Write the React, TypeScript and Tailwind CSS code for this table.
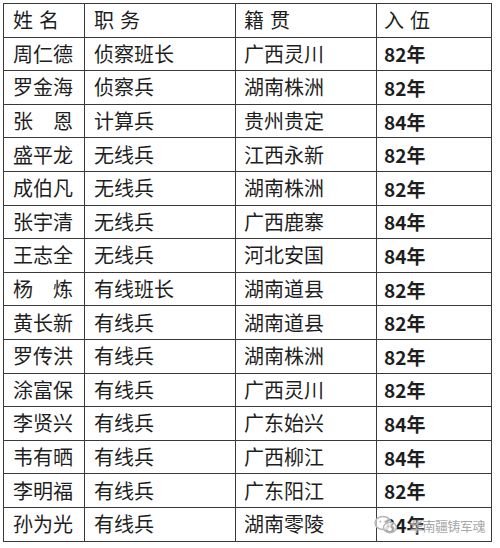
import React from "react";

type Row = { name: string; role: string; origin: string; year: string };

const rows: Row[] = [
  { name: "周仁德", role: "侦察班长", origin: "广西灵川", year: "82年" },
  { name: "罗金海", role: "侦察兵", origin: "湖南株洲", year: "82年" },
  { name: "张恩", role: "计算兵", origin: "贵州贵定", year: "84年" },
  { name: "盛平龙", role: "无线兵", origin: "江西永新", year: "82年" },
  { name: "成伯凡", role: "无线兵", origin: "湖南株洲", year: "82年" },
  { name: "张宇清", role: "无线兵", origin: "广西鹿寨", year: "84年" },
  { name: "王志全", role: "无线兵", origin: "河北安国", year: "84年" },
  { name: "杨炼", role: "有线班长", origin: "湖南道县", year: "82年" },
  { name: "黄长新", role: "有线兵", origin: "湖南道县", year: "82年" },
  { name: "罗传洪", role: "有线兵", origin: "湖南株洲", year: "82年" },
  { name: "涂富保", role: "有线兵", origin: "广西灵川", year: "82年" },
  { name: "李贤兴", role: "有线兵", origin: "广东始兴", year: "84年" },
  { name: "韦有晒", role: "有线兵", origin: "广西柳江", year: "84年" },
  { name: "李明福", role: "有线兵", origin: "广东阳江", year: "82年" },
  { name: "孙为光", role: "有线兵", origin: "湖南零陵", year: "84年" },
];

const cjk = { fontFamily: '"Noto Sans CJK SC", sans-serif' };

// two-character names are spread across the width of a three-character one
const Name = ({ text }: { text: string }) =>
  text.length === 2 ? (
    <span className="flex w-[60px] justify-between">
      <span>{text[0]}</span>
      <span>{text[1]}</span>
    </span>
  ) : (
    <span>{text}</span>
  );

const Spaced = ({ text }: { text: string }) => (
  <span className="flex gap-[6px]">
    <span>{text[0]}</span>
    <span>{text[1]}</span>
  </span>
);

const WeChatMark = () => (
  <svg width="24" height="20" viewBox="0 0 24 20" fill="none">
    <ellipse cx="9" cy="8" rx="8" ry="6.5" stroke="#b5b5b5" strokeWidth="1.4" fill="white" fillOpacity="0.6" />
    <ellipse cx="16" cy="12.5" rx="6.5" ry="5.2" stroke="#b5b5b5" strokeWidth="1.4" fill="white" fillOpacity="0.6" />
    <circle cx="6.3" cy="6.5" r="1" fill="#b5b5b5" />
    <circle cx="11.3" cy="6.5" r="1" fill="#b5b5b5" />
    <circle cx="14" cy="11.5" r="0.8" fill="#b5b5b5" />
    <circle cx="18.2" cy="11.5" r="0.8" fill="#b5b5b5" />
  </svg>
);

export default function App() {
  const cell = "border border-[#3a3a3a] p-0 align-middle";
  return (
    <div className="relative h-[548px] w-[500px] bg-white pl-[3px] pt-[3px] text-[20px] leading-none text-[#1e1e1e]" style={cjk}>
      <table className="border-collapse">
        <colgroup>
          <col className="w-[81px]" />
          <col className="w-[151px]" />
          <col className="w-[141px]" />
          <col className="w-[115px]" />
        </colgroup>
        <tbody>
          <tr className="h-[33.6px]">
            <td className={cell}>
              <div className="pl-[9px]"><Spaced text="姓名" /></div>
            </td>
            <td className={cell}>
              <div className="pl-[9px]"><Spaced text="职务" /></div>
            </td>
            <td className={cell}>
              <div className="pl-[8px]"><Spaced text="籍贯" /></div>
            </td>
            <td className={cell}>
              <div className="pl-[7px]"><Spaced text="入伍" /></div>
            </td>
          </tr>
          {rows.map((r, i) => (
            <tr key={i} className="h-[33.6px]">
              <td className={cell}>
                <div className="pl-[9px]"><Name text={r.name} /></div>
              </td>
              <td className={cell}>
                <div className="pl-[9px]">{r.role}</div>
              </td>
              <td className={cell}>
                <div className="pl-[8px]">{r.origin}</div>
              </td>
              <td className={cell}>
                <div className="pl-[7px] text-[19px] font-bold">{r.year}</div>
              </td>
            </tr>
          ))}
        </tbody>
      </table>

      {/* watermark */}
      <div className="absolute left-[374px] top-[515px] flex items-center gap-[2px]">
        <WeChatMark />
        <span className="pl-[10px] text-[13px] tracking-[-0.5px] text-[#a8a8a8] [text-shadow:0_0_2px_white]">
          华南疆铸军魂
        </span>
      </div>
    </div>
  );
}
